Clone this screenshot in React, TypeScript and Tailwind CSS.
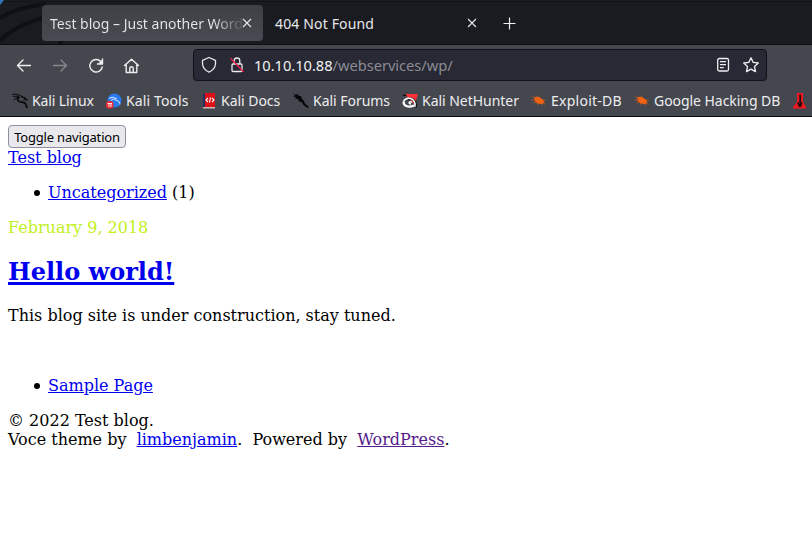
import React from 'react';

function Dragon() {
  return (
    <svg width="16" height="16" viewBox="0 0 16 16" fill="none" stroke="#08090b">
      <path d="M0 1.5 4 1 8 2.5 11 4M1 3.5 5 3 8 5M1.5 7 6 4" strokeWidth="1" />
      <path d="M7 3.5C4 6.5 6 9 10 9.2C13.5 9.5 14 11 15 15" strokeWidth="1.8" />
      <path d="M9 3.8 12.5 4.5 15 7 11.5 6.2" strokeWidth="1.2" />
    </svg>
  );
}

function Tools() {
  return (
    <svg width="16" height="16" viewBox="0 0 16 16" fill="none">
      <circle cx="8.5" cy="7.5" r="7" fill="#2878f0" />
      <path d="M3 5.5Q7 3 11 6M5 7.5Q8 5 10 7.5Q13.5 7.5 14 11.5" stroke="#b9d5fc" strokeWidth="1.1" />
      <rect y="8" width="7.5" height="7.5" rx="3" fill="#f02a32" />
      <path d="M1.5 10.5H6M3 10.5V14M5 10.5V14" stroke="#fff" strokeWidth=".9" />
    </svg>
  );
}

function Docs() {
  return (
    <svg width="16" height="16" viewBox="0 0 16 16" fill="none">
      <path d="M2 1H4V15H2Z" fill="#242e62" />
      <path d="M4 0H14V14H4Z" fill="#df1015" />
      <path d="M2 14H14V15.5H2Z" fill="#c9b9b8" />
      <path d="M7 5 5 7 7 9M11 5 13 7 11 9M9.5 4.5 8.5 9.5" stroke="#fff" strokeWidth="1.1" />
    </svg>
  );
}

function Forums() {
  return (
    <svg width="16" height="16" viewBox="0 0 16 16" fill="#050607">
      <path d="M0 0 3 2 4 .8 6 3 8 3 9 6 11 8 12 10.5 16 14 14.5 15 10.5 12 8.5 9 6 8.5 5 6 2 5.5 3 4.5 0 3 2 2.8Z" />
    </svg>
  );
}

function Hunter() {
  return (
    <svg width="16" height="16" viewBox="0 0 16 16" fill="none">
      <path d="M3 1H16L12.5 12Z" fill="#fb3038" />
      <path d="M0 3 3 1 5 3Z" fill="#111" />
      <path d="M13.5 14.5C15 9 10 4 6 6.5" stroke="#111" strokeWidth="2.6" />
      <path d="M1.5 8.5C3 5.5 6 5 8.5 5.5C12 6.5 13.8 10 12.8 13.8M10 9.2C7 8 6 10.5 9 11" stroke="#fff" strokeWidth="1.6" />
      <path d="M1.5 8.5C1.5 13.5 7 14.8 12 12.5" stroke="#fff" strokeWidth="2.2" />
    </svg>
  );
}

function Bug() {
  return (
    <svg width="16" height="16" viewBox="0 0 16 16" fill="#f16313">
      <path d="M3 4.5Q7 2.5 11 6L13.5 9 11.5 11Q7 11.5 4 8.5Z" />
      <path d="M1.5 3.5 5 5.5M.5 7H5M2.5 10 6 8.5M7 2.5 8.5 5M11 6.5 14.5 7.5M12 9 14 11.5M10 10.5 11.5 12.5M6 10 7 11.8" stroke="#d65b18" strokeWidth=".7" />
    </svg>
  );
}

function Thermo() {
  return (
    <svg width="16" height="16" viewBox="0 0 16 16">
      <path d="M5 0H11V9L14 14V15.5H1V14L5 9Z" fill="#ef1820" />
      <path d="M7 1.5H9V9L10.5 10 9 14H7L5 10 7 9Z" fill="#210b0d" />
      <path d="M7.5 2V11" stroke="#5b1014" />
    </svg>
  );
}

function Bookmark({ icon, label, className }: { icon: React.ReactNode; label: string; className: string }) {
  return (
    <div className={`flex h-full shrink-0 items-center gap-1 ${className}`}>
      <span className="shrink-0">{icon}</span>
      <span className="whitespace-nowrap">{label}</span>
    </div>
  );
}

function Close() {
  return (
    <svg width="10" height="10" viewBox="0 0 10 10" stroke="#e8e8ea" strokeWidth="1.1">
      <path d="M1 1 9 9M9 1 1 9" />
    </svg>
  );
}

function TabBar() {
  return (
    <div className="relative h-[45px] border-b border-[#0c0d10] bg-[#1a1b20]">
      <svg className="absolute left-0 top-0" width="812" height="44" viewBox="0 0 812 44" fill="none">
        <path d="M0 18Q18 7 46 4M0 40Q18 24 46 17M59 44Q64 37 75 32" stroke="#0f1014" strokeWidth="4" />
        <path d="M0 0H4L0 5Z" fill="#3475ba" />
        <path d="M4 1.5H812" stroke="#131418" />
      </svg>
      <div className="relative flex h-full pt-[5px] font-['Noto_Sans'] text-[14px] text-[#e8e8ea]">
        <div className="ml-[42px] flex h-9 w-[221px] items-center rounded-[4px] bg-gradient-to-b from-[#3e4046] to-[#494b52] pl-2">
          <span className="w-[192px] overflow-hidden whitespace-nowrap bg-gradient-to-r from-[#e8e8ea] from-85% to-[#55575d] bg-clip-text text-transparent">Test blog – Just another Word</span>
          <Close />
        </div>
        <div className="ml-3 flex h-9 w-[228px] items-center">
          <span className="w-[192px] tracking-[0.15px]">404 Not Found</span>
          <Close />
        </div>
        <svg className="mt-3" width="13" height="13" viewBox="0 0 13 13" stroke="#f1f1f2" strokeWidth="1.2">
          <path d="M.5 6.5H12.5M6.5.5V12.5" />
        </svg>
      </div>
    </div>
  );
}

function Toolbar() {
  return (
    <div className="flex h-10 items-start bg-[#45474e] pt-1">
      <svg className="ml-4 mt-[9px]" width="125" height="16" viewBox="0 0 125 16" fill="none" stroke="#ededf0" strokeWidth="1.4" strokeLinecap="round" strokeLinejoin="round">
        <path d="M14.5 7.5H1.5M7 2 1.5 7.5 7 13" />
        <path d="M37.5 7.5H50.5M45 2 50.5 7.5 45 13" stroke="#85868b" />
        <path d="M84.8 3.5A6.3 6.3 0 1 0 86.3 9M86.5 1V6H81.5" />
        <path d="M86.3 1.5V5.7H82Z" fill="#ededf0" stroke="none" />
        <path d="M108.5 7.5 115.5 1.2 122.5 7.5M110.2 6.5V14.5H120.8V6.5M113.8 14V10Q113.8 8.7 115.5 8.7T117.2 10V14" />
      </svg>
      <div className="ml-[52px] flex h-8 w-[574px] items-center rounded-[4px] border border-[#101116] bg-[#282934] pl-[7px] font-['Noto_Sans'] text-[14.67px] text-[#f2f2f3]">
        <svg width="46" height="18" viewBox="0 0 46 18" fill="none" stroke="#e8e8ea" strokeWidth="1.3" strokeLinejoin="round">
          <path d="M8 1.5 14.5 4.3V8Q14 13.5 8 16.2Q2 13.5 1.5 8V4.3Z" />
          <rect x="31" y="8" width="10" height="7.5" rx="1" />
          <path d="M33.2 8V4.8A2.8 2.8 0 0 1 38.8 4.8V8" />
          <path d="M29.5 2.2 42.5 15.7" stroke="#e6214e" strokeWidth="1.4" />
        </svg>
        <span className="ml-[7px] w-[461px] whitespace-nowrap tracking-[-0.03px]">10.10.10.88<span className="text-[#8b8c94]">/webservices/wp/</span></span>
        <svg width="48" height="18" viewBox="0 0 48 18" fill="none" stroke="#ededf0" strokeWidth="1.3" strokeLinejoin="round">
          <rect x="2.7" y="2.5" width="10.8" height="12.5" rx="1.5" />
          <path d="M5 5.7H11M5 8.7H11M5 11.7H8.8" />
          <path d="M36 1.8 38.2 6.4 43.3 7 39.5 10.5 40.5 15.6 36 13.1 31.5 15.6 32.5 10.5 28.7 7 33.8 6.4Z" />
        </svg>
      </div>
    </div>
  );
}

function Bookmarks() {
  return (
    <div className="flex h-8 items-center overflow-hidden border-b border-[#0c0d10] bg-[#45474e] pl-3 font-['Noto_Sans'] text-[14px] tracking-[-0.03px] text-[#ededf0]">
      <Bookmark icon={<Dragon />} label="Kali Linux" className="w-[94px] tracking-[-0.12px]" />
      <Bookmark icon={<Tools />} label="Kali Tools" className="w-[95px] tracking-[0.12px]" />
      <Bookmark icon={<Docs />} label="Kali Docs" className="w-[92px]" />
      <Bookmark icon={<Forums />} label="Kali Forums" className="w-[109px]" />
      <Bookmark icon={<Hunter />} label="Kali NetHunter" className="w-[129px]" />
      <Bookmark icon={<Bug />} label="Exploit-DB" className="w-[103px] tracking-[0.25px]" />
      <Bookmark icon={<Bug />} label="Google Hacking DB" className="w-[158px] tracking-[-0.05px]" />
      <Bookmark icon={<Thermo />} label="" className="w-5" />
    </div>
  );
}

function ListItem({ children }: { children: React.ReactNode }) {
  return (
    <li className="flex items-center">
      <span className="ml-[26px] mr-2 size-[6px] rounded-full bg-black" />
      <span>{children}</span>
    </li>
  );
}

export default function App() {
  return (
    <div className="h-[560px] w-[812px] overflow-hidden bg-white">
      <TabBar />
      <Toolbar />
      <Bookmarks />
      <main className="px-2 pt-2 font-['DejaVu_Serif',serif] text-[16px] leading-[19px] text-black">
        <button className="block h-[23px] w-[118px] whitespace-nowrap rounded-[4px] border border-[#8f8f9d] bg-[#e9e9ed] pt-px font-['Noto_Sans'] text-[13px] leading-5 tracking-[-0.18px]">Toggle navigation</button>
        <a className="block w-fit text-[#0000ee] underline">Test blog</a>
        <ul className="mt-4">
          <ListItem><a className="text-[#0000ee] underline">Uncategorized</a> (1)</ListItem>
        </ul>
        <p className="mt-4 text-[#c1f01e]">February 9, 2018</p>
        <h2 className="mt-[21px] text-[24px] font-bold leading-7 text-[#0000ee] underline decoration-3">Hello world!</h2>
        <p className="mt-5">This blog site is under construction, stay tuned.</p>
        <ul className="mt-[51px]">
          <ListItem><a className="text-[#0000ee] underline">Sample Page</a></ListItem>
        </ul>
        <footer className="mt-4">
          <p>© 2022 Test blog.</p>
          <p>Voce theme by &nbsp;<a className="text-[#0000ee] underline">limbenjamin</a>. &nbsp;Powered by &nbsp;<a className="text-[#551a8b] underline">WordPress</a>.</p>
        </footer>
      </main>
    </div>
  );
}
